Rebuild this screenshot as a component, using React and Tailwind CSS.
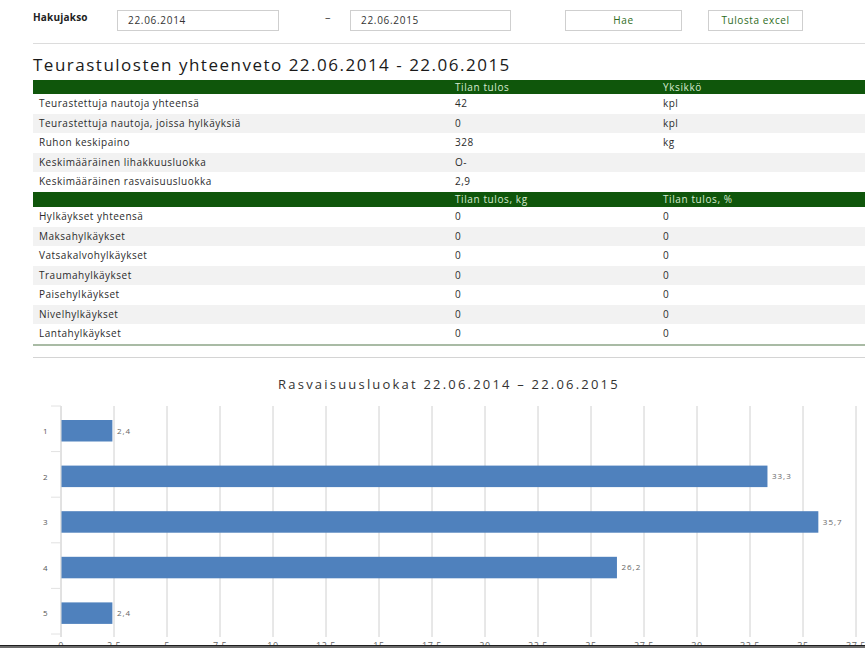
import React from "react";

const rows1 = [
  ["Teurastettuja nautoja yhteensä", "42", "kpl"],
  ["Teurastettuja nautoja, joissa hylkäyksiä", "0", "kpl"],
  ["Ruhon keskipaino", "328", "kg"],
  ["Keskimääräinen lihakkuusluokka", "O-", ""],
  ["Keskimääräinen rasvaisuusluokka", "2,9", ""],
];

const rows2 = [
  ["Hylkäykset yhteensä", "0", "0"],
  ["Maksahylkäykset", "0", "0"],
  ["Vatsakalvohylkäykset", "0", "0"],
  ["Traumahylkäykset", "0", "0"],
  ["Paisehylkäykset", "0", "0"],
  ["Nivelhylkäykset", "0", "0"],
  ["Lantahylkäykset", "0", "0"],
];

const bars = [
  ["1", 2.4, "2,4"],
  ["2", 33.3, "33,3"],
  ["3", 35.7, "35,7"],
  ["4", 26.2, "26,2"],
  ["5", 2.4, "2,4"],
];

const ticks = ["0", "2,5", "5", "7,5", "10", "12,5", "15", "17,5", "20", "22,5", "25", "27,5", "30", "32,5", "35", "37,5"];

function HeaderRow({ a, b, c, h }) {
  return (
    <div className={`flex ${h} bg-[#0f560b] text-[#d6ead0] text-[10px] tracking-[0.6px] items-center`}>
      <div className="w-[416px] pl-[6px]">{a}</div>
      <div className="w-[208px] pl-[6px]">{b}</div>
      <div className="w-[208px] pl-[6px]">{c}</div>
    </div>
  );
}

function Row({ r, i }) {
  return (
    <div className={`flex h-[19.5px] items-center text-[10px] tracking-[0.5px] text-[#2b2b2b] ${i % 2 === 1 ? "bg-[#f2f2f2]" : "bg-white"}`}>
      <div className="w-[416px] pl-[6px]">{r[0]}</div>
      <div className="w-[208px] pl-[6px]">{r[1]}</div>
      <div className="w-[208px] pl-[6px]">{r[2]}</div>
    </div>
  );
}

function Chart() {
  const x0 = 61;
  const unit = 53 / 2.5;
  const bandTop = 5;
  const pitch = 45.6;
  return (
    <svg width="865" height="248" className="block" style={{ fontFamily: "'Open Sans', sans-serif" }}>
      {ticks.map((t, k) => (
        k > 0 ? <line key={"g" + k} x1={x0 + k * 53} x2={x0 + k * 53} y1={5} y2={236} stroke="#d0d0d0" strokeWidth="1" /> : null
      ))}
      <line x1={x0} x2={x0} y1={5} y2={236} stroke="#c4c4c4" strokeWidth="1" />
      {[0, 1, 2, 3, 4, 5].map((k) => (
        <line key={"t" + k} x1={51} x2={x0} y1={bandTop + k * pitch} y2={bandTop + k * pitch} stroke="#e2e2e2" strokeWidth="1" />
      ))}
      {bars.map(([c, v, l], i) => {
        const y = bandTop + i * pitch + 14;
        const w = v * unit;
        return (
          <g key={c}>
            <text x={43} y={y + 14} fontSize="8" fill="#555">{c}</text>
            <rect x={x0 + 0.5} y={y} width={w} height={21.5} fill="#4f81bd" />
            <text x={x0 + w + 5} y={y + 13.5} fontSize="8" fill="#666" letterSpacing="1">{l}</text>
          </g>
        );
      })}
      {ticks.map((t, k) => (
        <text key={"l" + k} x={x0 + k * 53} y={248} fontSize="9" fill="#666" textAnchor="middle" letterSpacing="0.5">{t}</text>
      ))}
    </svg>
  );
}

export default function App() {
  return (
    <div className="relative w-[865px] h-[648px] overflow-hidden bg-white font-['Open_Sans',sans-serif] text-[#333]">
      <div className="pl-[33px]">
        <div className="flex items-start pt-[10px] h-[44px] border-b border-[#dcdcdc]">
          <div className="w-[84px] text-[10px] font-bold leading-[12px] pt-[1px] text-[#222] tracking-[0.2px]">Hakujakso</div>
          <div className="w-[162px] h-[21px] border border-[#cfcfcf] text-[10px] leading-[19px] pl-[10px] tracking-[0.7px]">22.06.2014</div>
          <div className="w-[71px] pl-[46px] text-[11px] leading-[14px] text-[#444]">–</div>
          <div className="w-[161px] h-[21px] border border-[#cfcfcf] text-[10px] leading-[19px] pl-[10px] tracking-[0.7px]">22.06.2015</div>
          <div className="w-[54px]"></div>
          <div className="w-[117px] h-[21px] border border-[#cfcfcf] text-[10px] leading-[19px] text-center text-[#2e6b22] tracking-[0.6px]">Hae</div>
          <div className="w-[26px]"></div>
          <div className="w-[95px] h-[21px] border border-[#cfcfcf] text-[10px] leading-[19px] text-center text-[#2e6b22] tracking-[0.6px]">Tulosta excel</div>
        </div>
        <div className="h-[36px] pt-[11px] text-[17px] leading-[20px] text-[#1a1a1a] tracking-[1.5px]">
          Teurastulosten yhteenveto 22.06.2014 - 22.06.2015
        </div>
        <div className="w-[832px] border-b-2 border-[#a9bba5]">
          <HeaderRow a="" b="Tilan tulos" c="Yksikkö" h="h-[14px]" />
          {rows1.map((r, i) => <Row key={r[0]} r={r} i={i} />)}
          <HeaderRow a="" b="Tilan tulos, kg" c="Tilan tulos, %" h="h-[15.5px]" />
          {rows2.map((r, i) => <Row key={r[0]} r={r} i={i} />)}
        </div>
        <div className="mt-[11px] border-t border-[#d4d4d4]"></div>
        <div className="h-[43px] pt-[18px] text-center text-[13px] leading-[16px] tracking-[2.2px] text-[#333]">
          Rasvaisuusluokat 22.06.2014 – 22.06.2015
        </div>
      </div>
      <Chart />
      <div className="absolute left-0 right-0 bottom-0 h-[3px] border-t border-[#1e1e1e] bg-[#6b6b6b]"></div>
    </div>
  );
}
